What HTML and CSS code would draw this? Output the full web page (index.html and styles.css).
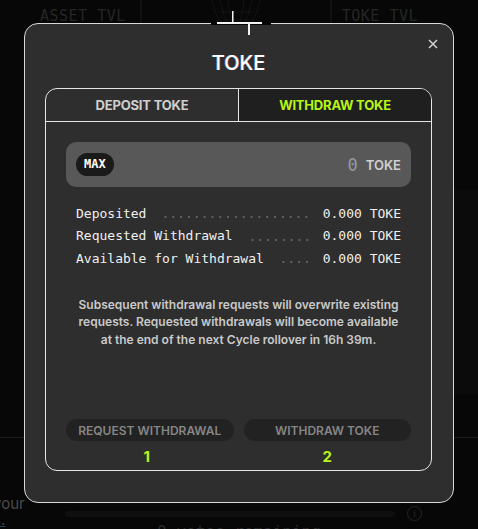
FILE: index.html
```html
<!DOCTYPE html>
<html lang="en">
<head>
    <meta charset="UTF-8">
    <meta name="viewport" content="width=device-width, initial-scale=1.0">
    <title>TOKE | Withdraw</title>
    <link rel="stylesheet" href="styles.css">
</head>
<body>
    <!-- page behind the dialog -->
    <div class="page">
        <div class="page-top">
            <span class="tvl">ASSET TVL</span>
            <svg class="globe" width="192" height="40" viewBox="0 0 192 40">
                <path d="M1 0 V40 M191 0 V40" stroke="#1c1c1c" fill="none"/>
                <path d="M72 0 Q76 20 84 25 M80 0 Q84 18 89 25 M88 0 Q90 16 93 25 M104 0 Q102 16 99 25 M112 0 Q108 18 103 25 M120 0 Q116 20 108 25 M78 12 H114 M83 20 H109" stroke="#141414" fill="none"/>
            </svg>
            <span class="tvl">TOKE TVL</span>
        </div>
        <div class="page-mid">
            <div class="side-card"></div>
        </div>
        <div class="page-rule"></div>
        <div class="page-bottom">
            <div class="vote-text">your<br><a>s.</a></div>
            <div class="vote-bar"></div>
            <span class="info-dot">i</span>
        </div>
        <div class="votes">0 votes remaining</div>
    </div>

    <div class="overlay">
        <div class="modal">
            <svg class="cross" width="60" height="36" viewBox="0 0 60 36">
                <rect x="0" y="22" width="60" height="3" fill="#070707"/>
                <rect x="6" y="22" width="45" height="2" fill="#f2f2f2"/>
                <rect x="21" y="11" width="1.5" height="12" fill="#f2f2f2"/>
                <rect x="37" y="24" width="2" height="11" fill="#f2f2f2"/>
            </svg>
            <button class="close" aria-label="Close">
                <svg width="10" height="10" viewBox="0 0 10 10">
                    <path d="M1 1 L9 9 M9 1 L1 9" stroke="#d4d4d4" stroke-width="1.5"/>
                </svg>
            </button>

            <h1 class="title">TOKE</h1>

            <div class="panel">
                <div class="tabs">
                    <div class="tab">DEPOSIT TOKE</div>
                    <div class="tab tab-active">WITHDRAW TOKE</div>
                </div>

                <div class="panel-body">
                    <div class="amount">
                        <span class="max">MAX</span>
                        <span class="amount-value">0</span>
                        <span class="amount-unit">TOKE</span>
                    </div>

                    <div class="stats">
                        <div class="stat">
                            <span>Deposited</span>
                            <span class="leader"></span>
                            <span>0.000 TOKE</span>
                        </div>
                        <div class="stat">
                            <span>Requested Withdrawal</span>
                            <span class="leader"></span>
                            <span>0.000 TOKE</span>
                        </div>
                        <div class="stat">
                            <span>Available for Withdrawal</span>
                            <span class="leader"></span>
                            <span>0.000 TOKE</span>
                        </div>
                    </div>

                    <p class="note">Subsequent withdrawal requests will overwrite existing requests. Requested withdrawals will become available at the end of the next Cycle rollover in 16h 39m.</p>

                    <div class="actions">
                        <div class="step">
                            <button class="btn">REQUEST WITHDRAWAL</button>
                            <span class="step-num step-first">1</span>
                        </div>
                        <div class="step">
                            <button class="btn">WITHDRAW TOKE</button>
                            <span class="step-num">2</span>
                        </div>
                    </div>
                </div>
            </div>
        </div>
    </div>
</body>
</html>
```

FILE: styles.css
```css
:root {
    --lime: #b8f516;
    --modal-bg: #2e2e2e;
    --line: #e6e6e6;
    --mono: "DejaVu Sans Mono", "Liberation Mono", monospace;
    --sans: Inter, "Liberation Sans", sans-serif;
}

* {
    box-sizing: border-box;
}

body {
    margin: 0;
    width: 478px;
    height: 529px;
    overflow: hidden;
    background: #070707;
    font-family: var(--sans);
}

/* background page */
.page {
    height: 100%;
    display: flex;
    flex-direction: column;
}

.page-top {
    display: flex;
    align-items: flex-start;
    padding: 0 60px 0 40px;
    height: 40px;
    flex-shrink: 0;
}

.tvl {
    font-family: var(--mono);
    font-size: 15px;
    color: #262626;
    margin-top: 7px;
    letter-spacing: 0.5px;
}

.globe {
    margin: 0 auto 0 14px;
}

.page-mid {
    height: 397px;
    flex-shrink: 0;
    display: flex;
    justify-content: flex-end;
    padding-top: 149px;
}

.side-card {
    width: 40px;
    height: 206px;
    background: #0b0b0b;
    border-radius: 8px 0 0 8px;
}

.page-rule {
    height: 1px;
    flex-shrink: 0;
    background: #1d1d1d;
}

.page-bottom {
    display: flex;
    align-items: flex-start;
    gap: 12px;
    padding-top: 58px;
    height: 84px;
    flex-shrink: 0;
}

.vote-text {
    font-size: 15px;
    line-height: 16px;
    color: #4a4a4a;
    margin-left: -7px;
    width: 60px;
}

.vote-text a {
    color: #30415c;
    text-decoration: underline;
}

.vote-bar {
    margin-top: 15px;
    width: 330px;
    height: 6px;
    border-radius: 3px;
    background: #0f0f0f;
}

.info-dot {
    margin-top: 10px;
    width: 15px;
    height: 15px;
    border: 1.5px solid #252525;
    border-radius: 50%;
    font-family: "Liberation Serif", serif;
    font-size: 11px;
    line-height: 12px;
    text-align: center;
    color: #252525;
}

.votes {
    font-family: var(--mono);
    font-size: 16px;
    color: #2a2a2a;
    text-align: center;
}

/* dialog */
.overlay {
    position: fixed;
    inset: 0;
    padding: 23px 0 0 24px;
}

.modal {
    position: relative;
    width: 430px;
    height: 480px;
    padding: 27px 21px 31px 20px;
    background: var(--modal-bg);
    border: 1px solid #d9d9d9;
    border-radius: 14px;
    display: flex;
    flex-direction: column;
}

.cross {
    position: absolute;
    top: -24px;
    left: 186px;
}

.close {
    position: absolute;
    top: 15px;
    right: 15px;
    padding: 0;
    border: none;
    background: none;
    line-height: 0;
}

.title {
    margin: 0 0 13px;
    font-size: 20px;
    line-height: 24px;
    font-weight: 500;
    color: #fff;
    text-align: center;
    text-shadow: -0.6px 0 rgba(80, 200, 255, 0.6), 0.6px 0 rgba(255, 90, 140, 0.5);
}

.panel {
    flex: 1;
    border: 1px solid var(--line);
    border-radius: 12px;
    display: flex;
    flex-direction: column;
    overflow: hidden;
}

.tabs {
    display: flex;
    height: 33px;
    border-bottom: 1px solid var(--line);
}

.tab {
    flex: 1;
    display: flex;
    align-items: center;
    justify-content: center;
    font-size: 13px;
    font-weight: 700;
    color: #cfcfcf;
    letter-spacing: -0.2px;
}

.tab-active {
    background: #1f1f1f;
    color: var(--lime);
    border-left: 1px solid var(--line);
}

.panel-body {
    flex: 1;
    padding: 20px 20px 5px;
    display: flex;
    flex-direction: column;
}

.amount {
    height: 45px;
    background: #585858;
    border-radius: 10px;
    display: flex;
    align-items: center;
    padding: 0 10px;
}

.max {
    background: #1a1a1a;
    border-radius: 12px;
    padding: 0 8px;
    height: 23px;
    line-height: 23px;
    font-family: var(--mono);
    font-size: 12px;
    font-weight: 700;
    color: #fff;
}

.amount-value {
    margin-left: auto;
    font-family: var(--mono);
    font-size: 17px;
    color: #929aa6;
}

.amount-unit {
    margin-left: 8px;
    font-size: 13px;
    font-weight: 600;
    color: #d0d0d0;
}

.stats {
    margin-top: 15px;
    padding: 0 10px;
    font-family: var(--mono);
    font-size: 13px;
    color: #f0f0f0;
}

.stat {
    display: flex;
    height: 22.5px;
    align-items: center;
    white-space: nowrap;
}

/* dotted leader between label and value, sitting on the baseline */
.leader {
    flex: 1;
    align-self: stretch;
    margin: 0 12px 0 13px;
    background-image: radial-gradient(circle, #606060 0.8px, transparent 1.2px);
    background-size: 7.83px 4px;
    background-position: right 0 top 13px;
    background-repeat: repeat-x;
}

.note {
    margin: 26px 0 0;
    padding: 0 8px;
    font-size: 12px;
    line-height: 17.5px;
    font-weight: 600;
    color: #c9c9c9;
    text-align: center;
}

.actions {
    margin-top: auto;
    display: flex;
    gap: 10px;
}

.step {
    flex: 1;
    display: flex;
    flex-direction: column;
    align-items: center;
}

.btn {
    width: 100%;
    height: 22px;
    border: none;
    border-radius: 11px;
    background: #222;
    color: #868686;
    font-family: var(--sans);
    font-size: 12px;
    font-weight: 600;
    padding: 0;
}

.step-num {
    margin-top: 7px;
    font-size: 15px;
    line-height: 17px;
    font-weight: 700;
    color: var(--lime);
}

.step-first {
    margin-right: 6px;
}
```
